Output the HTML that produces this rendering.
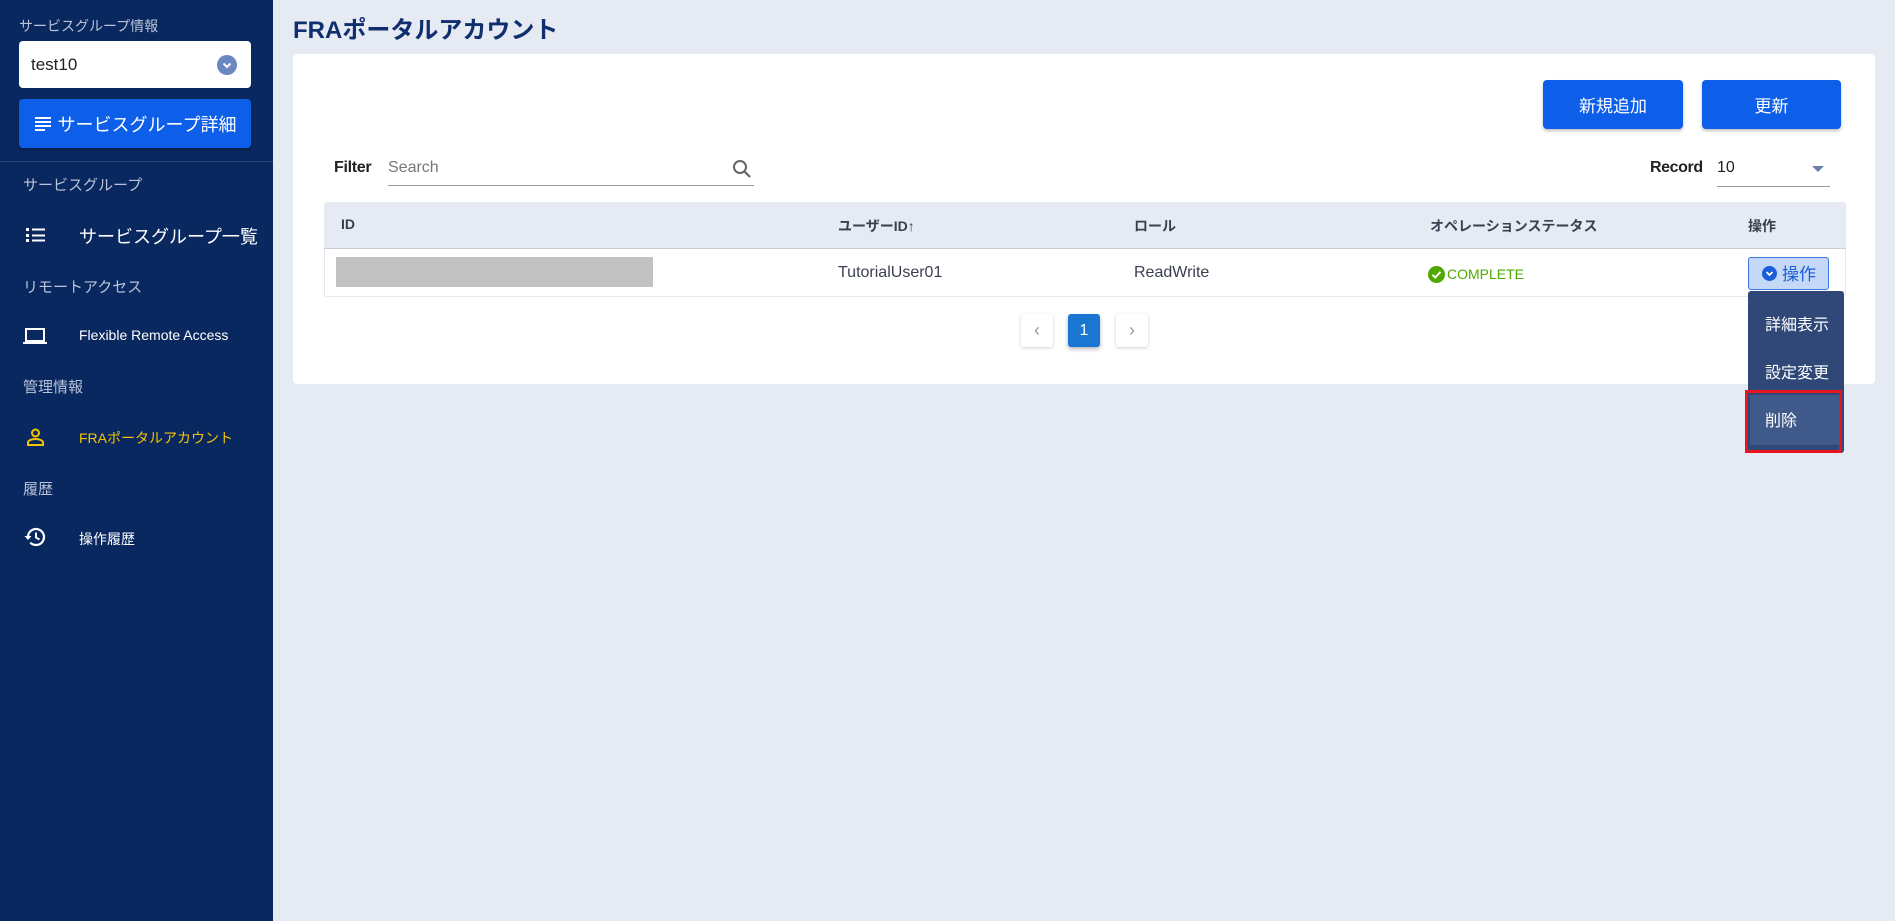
<!DOCTYPE html>
<html><head><meta charset="utf-8"><style>
*{box-sizing:border-box;margin:0;padding:0}
body{width:1895px;height:921px;overflow:hidden;background:#e6eaf3;font-family:"Liberation Sans","Noto Sans CJK JP",sans-serif;position:relative}
.a{position:absolute}
#sb{left:0;top:0;width:273px;height:921px;background:#0a2860;color:#fff}
.cat{position:absolute;left:23px;font-size:15px;color:#b9c3d8}
.item{position:absolute;left:79px;font-size:14px;color:#fff}
.btn{position:absolute;background:#0d5ee8;color:#fff;border-radius:4px;font-size:17px;display:flex;align-items:center;justify-content:center;box-shadow:0 2px 3px rgba(0,0,0,.25)}
.th{position:absolute;top:216px;font-size:14px;font-weight:bold;color:#3a3f4f}
.td{position:absolute;top:264px;font-size:16px;color:#3a3f4f}
.pg{position:absolute;top:314px;width:32px;height:33px;background:#fff;border-radius:3px;box-shadow:0 1px 3px rgba(0,0,0,.2);display:flex;align-items:center;justify-content:center;color:#999;font-size:18px}
.mi{position:absolute;left:1765px;font-size:16px;color:#fff}
</style></head><body>
<div id="sb" class="a">
 <div class="a" style="left:19px;top:16px;font-size:14px;color:#b9c3d8">サービスグループ情報</div>
 <div class="a" style="left:19px;top:41px;width:232px;height:47px;background:#fff;border-radius:4px"></div>
 <div class="a" style="left:31px;top:55px;font-size:17px;color:#222">test10</div>
 <div class="a" style="left:217px;top:55px;width:20px;height:20px;border-radius:50%;background:#6a87c0"></div>
 <svg class="a" style="left:221px;top:59px" width="12" height="12" viewBox="0 0 12 12"><path d="M2.5 4.5 6 8 9.5 4.5" stroke="#fff" stroke-width="2" fill="none"/></svg>
 <div class="btn" style="left:19px;top:99px;width:232px;height:49px;font-size:18px"><svg width="18" height="16" viewBox="0 0 18 16" style="margin-right:6px"><path d="M1 2h16M1 6h16M1 10h16M1 14h10" stroke="#fff" stroke-width="2"/></svg>サービスグループ詳細</div>
 <div class="a" style="left:0;top:161px;width:273px;height:1px;background:#2a4478"></div>
 <div class="cat" style="top:174px">サービスグループ</div>
 <svg class="a" style="left:26px;top:227px" width="19" height="16" viewBox="0 0 19 16"><path d="M0 1h3v3H0zM0 7h3v3H0zM0 12h3v3H0z" fill="#fff"/><path d="M6 2.5h13M6 8.5h13M6 13.5h13" stroke="#fff" stroke-width="2"/></svg>
 <div class="item" style="top:223px;font-size:18px">サービスグループ一覧</div>
 <div class="cat" style="top:276px">リモートアクセス</div>
 <svg class="a" style="left:23px;top:328px" width="24" height="16" viewBox="0 0 24 16"><rect x="3" y="1" width="18" height="12" stroke="#fff" stroke-width="2" fill="none"/><path d="M0 15h24" stroke="#fff" stroke-width="2"/></svg>
 <div class="item" style="top:327px">Flexible Remote Access</div>
 <div class="cat" style="top:376px">管理情報</div>
 <svg class="a" style="left:27px;top:428px" width="17" height="18" viewBox="0 0 17 18"><circle cx="8.5" cy="5" r="3.5" stroke="#f5c400" stroke-width="2" fill="none"/><path d="M1 17v-2.5c0-2 3.5-3.5 7.5-3.5s7.5 1.5 7.5 3.5V17z" stroke="#f5c400" stroke-width="2" fill="none"/></svg>
 <div class="item" style="top:428px;color:#f5c400">FRAポータルアカウント</div>
 <div class="cat" style="top:478px">履歴</div>
 <svg class="a" style="left:24px;top:527px" width="22" height="20" viewBox="0 0 22 20"><path d="M4 10a8 8 0 1 1 2.3 5.6" stroke="#fff" stroke-width="2.2" fill="none"/><path d="M0.5 9h7L4 13z" fill="#fff"/><path d="M12 5.5v5l3.5 2" stroke="#fff" stroke-width="2" fill="none"/></svg>
 <div class="item" style="top:529px">操作履歴</div>
</div>
<div class="a" style="left:293px;top:10px;font-size:24px;font-weight:bold;color:#0f2f6e">FRAポータルアカウント</div>
<div class="a" style="left:293px;top:54px;width:1582px;height:330px;background:#fff;border-radius:4px"></div>
<div class="btn" style="left:1543px;top:80px;width:140px;height:49px">新規追加</div>
<div class="btn" style="left:1702px;top:80px;width:139px;height:49px">更新</div>
<div class="a" style="left:334px;top:159px;font-size:16px;font-weight:bold;color:#222;letter-spacing:-0.3px">Filter</div>
<div class="a" style="left:388px;top:159px;font-size:16px;color:#777">Search</div>
<div class="a" style="left:388px;top:185px;width:366px;height:1px;background:#999"></div>
<svg class="a" style="left:732px;top:159px" width="20" height="20" viewBox="0 0 20 20"><circle cx="8" cy="8" r="6" stroke="#666" stroke-width="2" fill="none"/><path d="M12.5 12.5 18 18" stroke="#666" stroke-width="2.2"/></svg>
<div class="a" style="left:1650px;top:159px;font-size:16px;font-weight:bold;color:#222;letter-spacing:-0.4px">Record</div>
<div class="a" style="left:1717px;top:159px;font-size:16px;color:#222">10</div>
<svg class="a" style="left:1812px;top:166px" width="12" height="7" viewBox="0 0 12 7"><path d="M0 0h12L6 6z" fill="#6a7fa8"/></svg>
<div class="a" style="left:1717px;top:186px;width:113px;height:1px;background:#999"></div>
<div class="a" style="left:324px;top:202px;width:1522px;height:95px;border:1px solid #e3e8f0;border-radius:3px;background:#fff"></div>
<div class="a" style="left:324px;top:202px;width:1522px;height:47px;background:#e6eaf3;border-bottom:1px solid #c8cdd8;border-radius:3px 3px 0 0"></div>
<div class="th" style="left:341px">ID</div>
<div class="th" style="left:838px">ユーザーID↑</div>
<div class="th" style="left:1134px">ロール</div>
<div class="th" style="left:1430px">オペレーションステータス</div>
<div class="th" style="left:1748px">操作</div>
<div class="a" style="left:336px;top:257px;width:317px;height:30px;background:#c2c2c2"></div>
<div class="td" style="left:838px">TutorialUser01</div>
<div class="td" style="left:1134px">ReadWrite</div>
<svg class="a" style="left:1428px;top:266px" width="17" height="17" viewBox="0 0 17 17"><circle cx="8.5" cy="8.5" r="8.5" fill="#4fa800"/><path d="M4.5 8.8 7.3 11.5 12.5 5.8" stroke="#fff" stroke-width="2" fill="none"/></svg>
<div class="a" style="left:1447px;top:266px;font-size:14px;color:#4fa800">COMPLETE</div>
<div class="a" style="left:1748px;top:257px;width:81px;height:33px;background:#c5d8f8;border:1px solid #3b78e0;border-radius:3px"></div>
<div class="a" style="left:1762px;top:266px;width:15px;height:15px;border-radius:50%;background:#1b5ed8"></div>
<svg class="a" style="left:1765px;top:269px" width="9" height="9" viewBox="0 0 9 9"><path d="M1.5 3 4.5 6 7.5 3" stroke="#fff" stroke-width="1.8" fill="none"/></svg>
<div class="a" style="left:1782px;top:260px;font-size:17px;color:#1b5ed8">操作</div>
<div class="a" style="left:1748px;top:291px;width:96px;height:162px;background:#2f4878;border-radius:3px"></div>
<div class="a" style="left:1750px;top:395px;width:90px;height:50px;background:#3f5a8a"></div>
<div class="a" style="left:1745px;top:390px;width:97px;height:63px;border:3px solid #e8141e"></div>
<div class="mi" style="top:311px">詳細表示</div>
<div class="mi" style="top:359px">設定変更</div>
<div class="mi" style="top:407px">削除</div>
<div class="pg" style="left:1021px">‹</div>
<div class="pg" style="left:1068px;background:#1976d2;color:#fff;font-size:16px;box-shadow:0 2px 4px rgba(0,0,0,.3)">1</div>
<div class="pg" style="left:1116px">›</div>
</body></html>
